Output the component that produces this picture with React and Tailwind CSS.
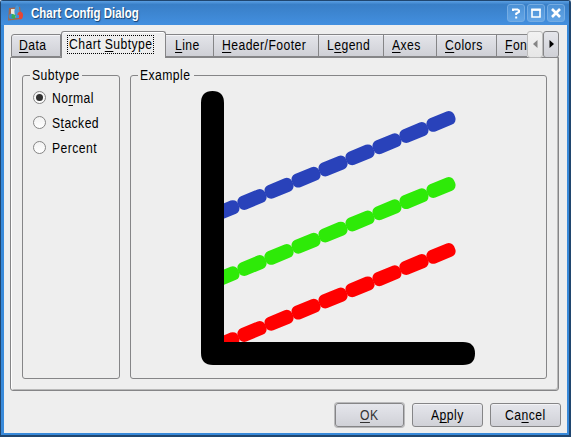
import React from 'react';

const DASHES = [0, 1, 2, 3, 4, 5, 6, 7, 8];

function Label({ text, accel, width, left = 0 }) {
  const at = accel === undefined ? -1 : accel;
  return (
    <span className="block h-[18px] shrink-0 whitespace-nowrap text-left" style={{ width, marginLeft: left }}>
      <span className="block w-max origin-left scale-x-[0.87] text-[14px] leading-[18px] tracking-[0.5px]">
        {at < 0 ? text : (
          <>
            {text.slice(0, at)}
            <span className="underline decoration-1 underline-offset-[2px] [text-decoration-skip-ink:none]">{text[at]}</span>
            {text.slice(at + 1)}
          </>
        )}
      </span>
    </span>
  );
}

function Tab({ text, accel, width, pad, first }) {
  return (
    <div
      className={'mt-[3px] flex h-[23px] shrink-0 items-center overflow-hidden border-y border-r border-[#858587] bg-gradient-to-b from-[#e4e5ea] to-[#cfd0d6] pb-px shadow-[inset_0_1px_0_#f4f4f7] ' + (first ? 'rounded-tl-[3px] border-l' : '')}
      style={{ width, paddingLeft: pad }}
    >
      <Label text={text} accel={accel} width={width} />
    </div>
  );
}

function Radio({ text, accel, checked }) {
  return (
    <div className="flex h-[25px] items-center">
      <span className="flex h-[13px] w-[13px] shrink-0 items-center justify-center rounded-full border border-[#858585] bg-gradient-to-b from-[#f2f2f2] to-white">
        {checked && <span className="h-[7px] w-[7px] rounded-full bg-[#303030]" />}
      </span>
      <Label text={text} accel={accel} width={60} left={6} />
    </div>
  );
}

function TitleButton({ children }) {
  return (
    <span className="flex h-[18px] w-[18px] items-center justify-center rounded-[3px] border border-[#75ace3] bg-gradient-to-b from-[#4b91d6] to-[#63a5e6]">
      <svg width="16" height="16" viewBox="0 0 16 16" fill="none" stroke="white" strokeWidth="2" className="shrink-0">{children}</svg>
    </span>
  );
}

function Button({ text, accel, width, pad, isDefault }) {
  return (
    <button
      className={'flex h-[24px] shrink-0 items-center rounded-[3px] border border-[#858587] bg-gradient-to-b from-[#e5e6ec] to-[#d0d1d7] ' + (isDefault ? 'mr-px text-[#333333] shadow-[0_0_0_1px_#b9b9bb]' : 'shadow-[inset_0_1px_0_#f3f3f6]')}
      style={{ width, paddingLeft: pad }}
    >
      <Label text={text} accel={accel} width={50} />
    </button>
  );
}

function Line({ y, color }) {
  return (
    <g fill={color}>
      {DASHES.map((i) => (
        <rect key={i} x="-14.8" y="-7.1" width="29.6" height="14.2" rx="5.8" transform={`translate(${441 - i * 27} ${y + i * 11.15}) rotate(-22.4)`} />
      ))}
    </g>
  );
}

export default function App() {
  return (
    <div className="h-[437px] w-[571px] overflow-hidden bg-[#c5d6e8] font-['Liberation_Sans',Arial,sans-serif] text-black">
      <div className="flex h-full w-full flex-col rounded-t-[3px] border border-[#20466f] border-b-2 border-r-2 bg-[#398ada]">
        <div className="flex h-[24px] shrink-0 items-center bg-gradient-to-b from-[#5a9fe3] via-[#397fc7] via-15% to-[#438fdf] pl-[6px] pr-[4px]">
          <svg width="17" height="17" viewBox="0 0 17 17" className="shrink-0">
            <path d="M2 3L13 2L15 14L1 15.5Z" fill="#a5674d" />
            <path d="M4 4L12 4V12L4 13Z" fill="#eee7dc" />
            <path d="M10 0C7 3 7 7 8 10L13 11L12 2Z" fill="#4994d5" />
            <circle cx="4.5" cy="11.5" r="2.7" fill="#3a8cc9" />
            <path d="M5 9L9 10L8 14L4.5 13Z" fill="#35af55" />
            <ellipse cx="13.2" cy="10.5" rx="2.8" ry="3.7" fill="#e84634" />
            <path d="M9 10H12V13H8.5Z" fill="#418fdd" />
          </svg>
          <span className="ml-[7px] w-[150px] whitespace-nowrap">
            <span className="block w-max origin-left scale-x-[0.82] text-[14px] font-bold leading-[20px] text-white [text-shadow:1px_1px_1px_#173f6c]">Chart Config Dialog</span>
          </span>
          <div className="ml-auto flex gap-[2px]">
            <TitleButton><path d="M5 6V4.5H9.5L11 5.5V7L8.2 8.5V10M8.2 11.5V13.5" /></TitleButton>
            <TitleButton><path d="M4 5H12V12H4Z" strokeWidth="1.6" /><path d="M3.2 4.5H12.8" /></TitleButton>
            <TitleButton><path d="M4 4L12 12M12 4L4 12" strokeWidth="2.6" /></TitleButton>
          </div>
        </div>
        <main className="ml-[3px] mr-[1px] flex h-[408px] w-[563px] flex-col bg-[#eeeeee] pl-[6px] pt-[6px]">
          <div className="z-10 flex h-[27px] w-[549px] shrink-0 items-start pl-[1px]">
            <Tab text="Data" accel={0} width={50} pad={7} first />
            <div className="flex h-[27px] w-[105px] shrink-0 items-center rounded-t-[3px] border border-b-0 border-[#858587] bg-[#eeeeee] pb-[2px] pl-[5px] shadow-[inset_0_1px_0_#fff]">
              <span className="flex h-[19px] w-[87px] items-center border border-dotted border-black pl-[1px]">
                <Label text="Chart Subtype" accel={6} width={84} />
              </span>
            </div>
            <Tab text="Line" accel={0} width={48} pad={9} />
            <Tab text="Header/Footer" accel={0} width={105} pad={8} />
            <Tab text="Legend" accel={1} width={65} pad={8} />
            <Tab text="Axes" accel={0} width={53} pad={8} />
            <Tab text="Colors" accel={0} width={60} pad={8} />
            <div className="mt-[3px] flex h-[23px] w-[30px] shrink-0 items-center overflow-hidden border-y border-[#858587] bg-gradient-to-b from-[#e4e5ea] to-[#cfd0d6] pb-px pl-[8px]">
              <Label text="Fon" accel={0} width={22} />
            </div>
            <span className="flex h-[27px] w-[16px] shrink-0 items-center justify-center rounded-[3px] border border-[#bcbcbc] bg-gradient-to-b from-[#f2f2f2] to-[#e6e6e6] pb-[2px]">
              <svg width="5" height="8" viewBox="0 0 5 8"><path d="M4.5 0V8L0 4Z" fill="#858585" /></svg>
            </span>
            <span className="flex h-[27px] w-[16px] shrink-0 items-center justify-center rounded-[3px] border border-[#858587] bg-gradient-to-b from-[#e5e6eb] to-[#cfd0d6] pb-[2px]">
              <svg width="5" height="8" viewBox="0 0 5 8"><path d="M.5 0V8L5 4Z" fill="black" /></svg>
            </span>
          </div>
          <div className="-mt-px flex h-[334px] w-[549px] shrink-0 gap-[10px] rounded-b-[3px] border border-[#858587] pl-[11px] pt-[8px] shadow-[inset_1px_0_0_#fff,inset_-1px_-1px_0_#b9b9b9]">
            <fieldset className="h-[313px] w-[98px] rounded-[3px] border border-[#858587] pl-[10px]">
              <legend className="-ml-[3px] px-[2px]"><Label text="Subtype" width={48} /></legend>
              <div className="pt-px">
                <Radio text="Normal" accel={2} checked />
                <Radio text="Stacked" accel={1} />
                <Radio text="Percent" />
              </div>
            </fieldset>
            <fieldset className="h-[313px] w-[417px] rounded-[3px] border border-[#858587] pl-[9px]">
              <legend className="-ml-[2px] px-[2px]"><Label text="Example" width={52} /></legend>
              <svg width="400" height="285" viewBox="140 84 400 285" className="block">
                <Line y={121.4} color="#2942ba" />
                <Line y={187.5} color="#2eea08" />
                <Line y={253.4} color="#ff0000" />
                <path d="M201 103Q201 91 212.5 91Q224 91 224 103V342H463Q475 342 475 353.5Q475 365 463 365H213Q201 365 201 353Z" fill="black" />
              </svg>
            </fieldset>
          </div>
          <footer className="mt-[12px] flex w-[551px] shrink-0 justify-end gap-[7px]">
            <Button text="OK" accel={0} width={69} pad={24} isDefault />
            <Button text="Apply" accel={1} width={71} pad={18} />
            <Button text="Cancel" accel={2} width={71} pad={14} />
          </footer>
        </main>
      </div>
    </div>
  );
}
